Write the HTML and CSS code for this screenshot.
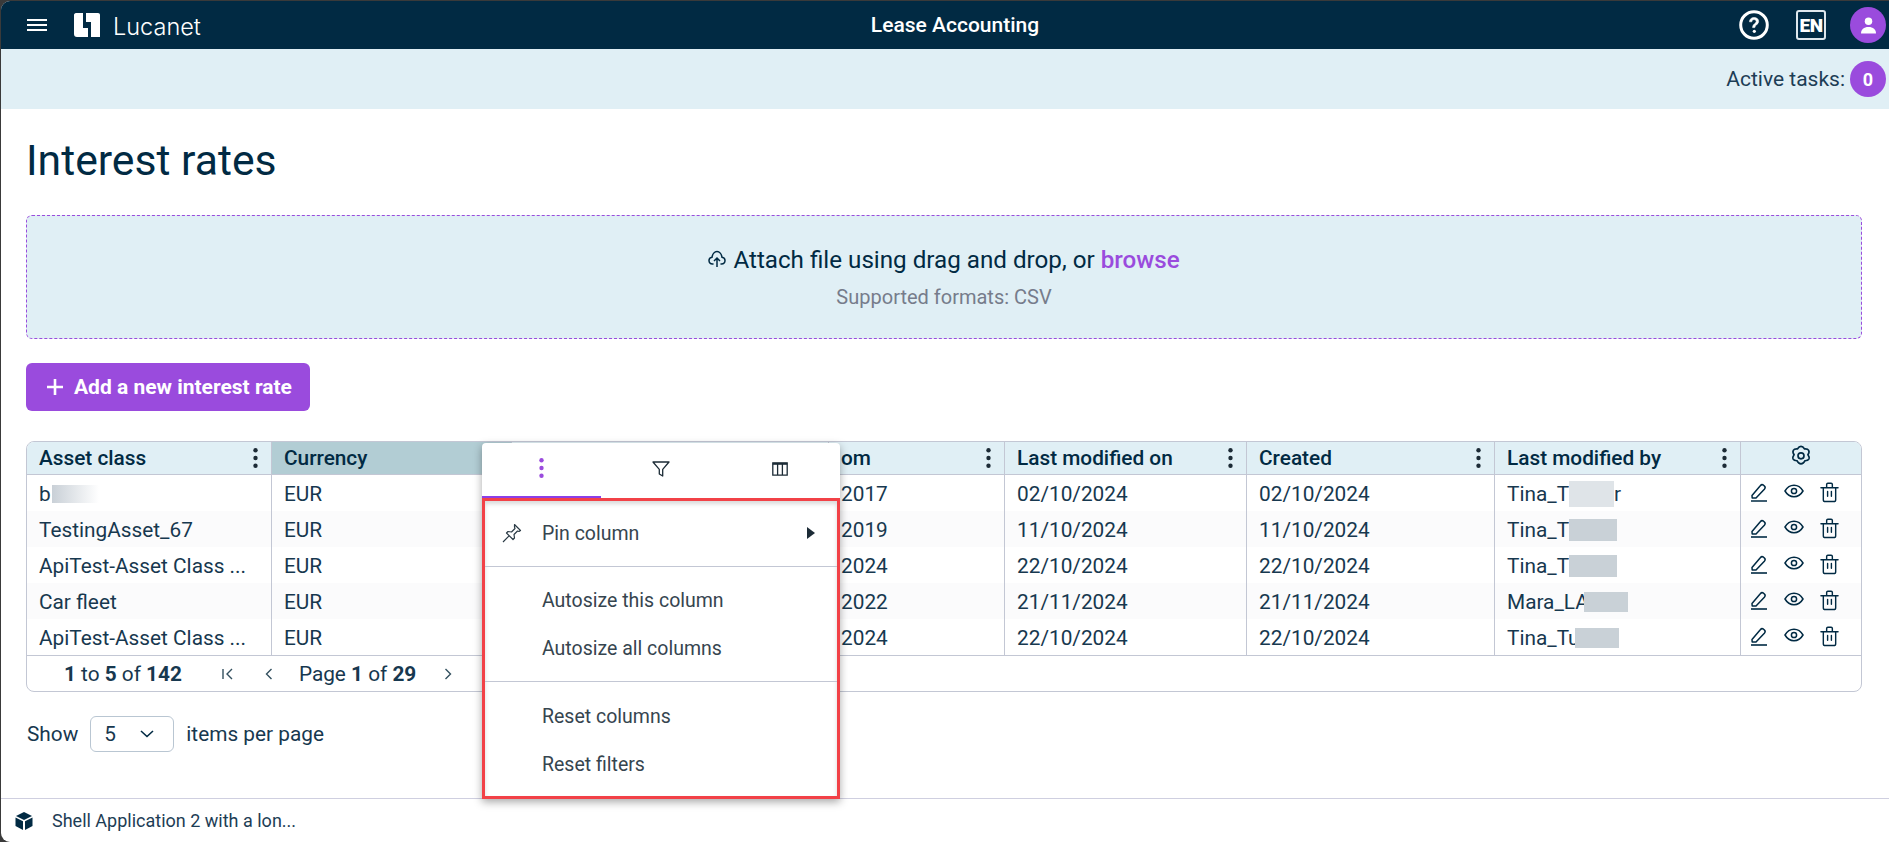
FILE: index.html
```html
<!DOCTYPE html>
<html lang="en">
<head>
    <meta charset="UTF-8">
    <meta name="viewport" content="width=device-width, initial-scale=1.0">
    <title>Interest rates - Lease Accounting</title>
    <link rel="stylesheet" href="styles.css">
</head>
<body>
<svg class="sprites" width="0" height="0">
    <symbol id="kebab" viewBox="0 0 4 20"><circle cx="2" cy="3" r="2"/><circle cx="2" cy="10" r="2"/><circle cx="2" cy="17" r="2"/></symbol>
    <symbol id="pencil" viewBox="0 0 18 20"><path d="M2 13.500 10.500 3.500c.8-1 2-1.100 3-.3l.8.7c1 .8 1 2 .3 3L6 16H2.200z" fill="none" stroke="currentColor" stroke-width="1.500" stroke-linejoin="round"/><path d="M1 19h16" fill="none" stroke="currentColor" stroke-width="1.600"/></symbol>
    <symbol id="eye" viewBox="0 0 20 14"><path d="M1 7c2.200-3.800 5.200-5.700 9-5.700s6.800 1.900 9 5.700c-2.200 3.800-5.200 5.700-9 5.700S3.200 10.800 1 7z" fill="none" stroke="currentColor" stroke-width="1.500"/><circle cx="10" cy="7" r="2.600" fill="none" stroke="currentColor" stroke-width="1.500"/></symbol>
    <symbol id="trash" viewBox="0 0 20 22"><path d="M1 6h18M3.500 6v12.500c0 1.200.8 2 2 2h9c1.200 0 2-.8 2-2V6M7 6V2.500c0-.8.5-1.300 1.300-1.300h3.400c.8 0 1.300.5 1.300 1.300V6M8 10v5M12 10v5" fill="none" stroke="currentColor" stroke-width="1.500" stroke-linecap="round"/></symbol>
</svg>

<div class="app">
    <header class="topbar">
        <div class="topbar-left">
            <svg class="burger" viewBox="0 0 20 12"><path d="M0 1h20M0 6h20M0 11h20" stroke="#fff" stroke-width="2"/></svg>
            <svg class="logo" viewBox="0 0 26 24"><path d="M2 0h7v15h5v9H3c-2 0-3-1-3-3V2c0-1 .8-2 2-2z" fill="#fff"/><path d="M12 0h12c1.200 0 2 .8 2 2v22h-9V9h-5z" fill="#fff"/></svg>
            <span class="brand">Lucanet</span>
        </div>
        <div class="app-title">Lease Accounting</div>
        <div class="topbar-right">
            <svg class="top-icon" viewBox="0 0 30 30"><circle cx="15" cy="15" r="13.300" fill="none" stroke="#fff" stroke-width="3"/><path d="M10.500 11.800c0-2.700 2-4.300 4.600-4.300s4.500 1.500 4.500 3.900c0 3.300-3.800 3.300-3.800 6.200h-2.200c0-3.900 3.600-4 3.600-6.100 0-1.100-.9-1.900-2.100-1.900-1.300 0-2.200.9-2.300 2.200z" fill="#fff" stroke="#fff" stroke-width=".6"/><circle cx="15.300" cy="21.300" r="1.600" fill="#fff"/></svg>
            <span class="lang">EN</span>
            <span class="avatar"><svg viewBox="0 0 16 18" width="15" height="17"><circle cx="8" cy="4.500" r="4" fill="#fff"/><path d="M0 17.500c0-4.500 3-7 8-7s8 2.500 8 7z" fill="#fff"/></svg></span>
        </div>
    </header>

    <div class="taskbar">
        <span>Active tasks:</span>
        <span class="task-count">0</span>
    </div>

    <main class="content">
        <h1>Interest rates</h1>

        <div class="dropzone">
            <p class="drop-main"><svg class="upload" viewBox="0 0 18 18"><path d="M5 14H4.500C2.400 14 1 12.500 1 10.600c0-1.800 1.300-3.200 3-3.400C4.500 4.300 6.500 1.500 9 1.500s4.500 2.800 5 5.700c1.700.2 3 1.600 3 3.400 0 1.900-1.400 3.400-3.500 3.400H13" fill="none" stroke="#012a43" stroke-width="1.500" stroke-linecap="round"/><path d="M9 17V8.500M6 11l3-3 3 3" fill="none" stroke="#012a43" stroke-width="1.500"/></svg>Attach file using drag and drop, or <a class="browse">browse</a></p>
            <p class="drop-hint">Supported formats: CSV</p>
        </div>

        <button class="add-btn"><svg viewBox="0 0 16 16" width="16" height="16"><path d="M8 0v16M0 8h16" stroke="#fff" stroke-width="2.600"/></svg>Add a new interest rate</button>

        <div class="grid-wrap">
            <div class="grid">
                <div class="row head">
                    <div class="cell">Asset class<svg class="kebab"><use href="#kebab"/></svg></div>
                    <div class="cell active">Currency</div>
                    <div class="cell"></div>
                    <div class="cell">om<svg class="kebab"><use href="#kebab"/></svg></div>
                    <div class="cell">Last modified on<svg class="kebab"><use href="#kebab"/></svg></div>
                    <div class="cell">Created<svg class="kebab"><use href="#kebab"/></svg></div>
                    <div class="cell">Last modified by<svg class="kebab"><use href="#kebab"/></svg></div>
                    <div class="cell center">
                        <svg class="gear" viewBox="0 0 20 20"><path d="M10 1.200c1.300 0 2.300 1 3 2.100 1.300-.1 2.800.1 3.400 1.200.7 1.100.1 2.500-.6 3.600.7 1 1.500 2.300.9 3.500-.6 1.100-2 1.500-3.300 1.500-.6 1.200-1.700 2.700-3.400 2.700s-2.800-1.500-3.400-2.700c-1.300 0-2.700-.4-3.300-1.500-.6-1.200.2-2.500.9-3.500-.7-1.100-1.300-2.500-.6-3.600.6-1.100 2.100-1.300 3.400-1.200.7-1.100 1.700-2.100 3-2.100z" fill="none" stroke="currentColor" stroke-width="1.400"/><circle cx="10" cy="9" r="2.500" fill="none" stroke="currentColor" stroke-width="1.400"/></svg>
                    </div>
                </div>
                <div class="row">
                    <div class="cell">b<span class="blur fade"></span></div>
                    <div class="cell">EUR</div>
                    <div class="cell"></div>
                    <div class="cell">2017</div>
                    <div class="cell">02/10/2024</div>
                    <div class="cell">02/10/2024</div>
                    <div class="cell">Tina_T<span class="blur pale"></span>r</div>
                    <div class="cell actions"><svg class="pencil"><use href="#pencil"/></svg><svg class="eye"><use href="#eye"/></svg><svg class="trash"><use href="#trash"/></svg></div>
                </div>
                <div class="row">
                    <div class="cell">TestingAsset_67</div>
                    <div class="cell">EUR</div>
                    <div class="cell"></div>
                    <div class="cell">2019</div>
                    <div class="cell">11/10/2024</div>
                    <div class="cell">11/10/2024</div>
                    <div class="cell">Tina_T<span class="blur wide"></span></div>
                    <div class="cell actions"><svg class="pencil"><use href="#pencil"/></svg><svg class="eye"><use href="#eye"/></svg><svg class="trash"><use href="#trash"/></svg></div>
                </div>
                <div class="row">
                    <div class="cell">ApiTest-Asset Class ...</div>
                    <div class="cell">EUR</div>
                    <div class="cell"></div>
                    <div class="cell">2024</div>
                    <div class="cell">22/10/2024</div>
                    <div class="cell">22/10/2024</div>
                    <div class="cell">Tina_T<span class="blur wide"></span></div>
                    <div class="cell actions"><svg class="pencil"><use href="#pencil"/></svg><svg class="eye"><use href="#eye"/></svg><svg class="trash"><use href="#trash"/></svg></div>
                </div>
                <div class="row">
                    <div class="cell">Car fleet</div>
                    <div class="cell">EUR</div>
                    <div class="cell"></div>
                    <div class="cell">2022</div>
                    <div class="cell">21/11/2024</div>
                    <div class="cell">21/11/2024</div>
                    <div class="cell">Mara_LA<span class="blur over"></span></div>
                    <div class="cell actions"><svg class="pencil"><use href="#pencil"/></svg><svg class="eye"><use href="#eye"/></svg><svg class="trash"><use href="#trash"/></svg></div>
                </div>
                <div class="row">
                    <div class="cell">ApiTest-Asset Class ...</div>
                    <div class="cell">EUR</div>
                    <div class="cell"></div>
                    <div class="cell">2024</div>
                    <div class="cell">22/10/2024</div>
                    <div class="cell">22/10/2024</div>
                    <div class="cell">Tina_Tu<span class="blur over"></span></div>
                    <div class="cell actions"><svg class="pencil"><use href="#pencil"/></svg><svg class="eye"><use href="#eye"/></svg><svg class="trash"><use href="#trash"/></svg></div>
                </div>
                <div class="pager">
                    <span class="pager-count"><b>1</b> to <b>5</b> of <b>142</b></span>
                    <svg class="pager-btn" viewBox="0 0 14 14"><path d="M2 2v10M11 2 6 7l5 5" fill="none" stroke="currentColor" stroke-width="1.400"/></svg>
                    <svg class="pager-btn" viewBox="0 0 14 14"><path d="M9.500 2 4.500 7l5 5" fill="none" stroke="currentColor" stroke-width="1.400"/></svg>
                    <span class="pager-page">Page <b>1</b> of <b>29</b></span>
                    <svg class="pager-btn" viewBox="0 0 14 14"><path d="M4.500 2l5 5-5 5" fill="none" stroke="currentColor" stroke-width="1.400"/></svg>
                </div>
            </div>

            <div class="col-menu">
                <div class="tabs">
                    <div class="tab selected"><svg class="kebab purple"><use href="#kebab"/></svg></div>
                    <div class="tab"><svg viewBox="0 0 18 18" width="18" height="18"><path d="M1 2h16l-6.300 7.300V16l-3.400-2V9.300z" fill="none" stroke="#1c2b36" stroke-width="1.300" stroke-linejoin="round"/></svg></div>
                    <div class="tab"><svg viewBox="0 0 16 14" width="16" height="14"><path d="M.8.800h14.400v12.400H.8zM5.600.800v12.400M10.400.800v12.400" fill="none" stroke="#1c2b36" stroke-width="1.300"/><path d="M.8.800h14.400v2H.8z" fill="#1c2b36"/></svg></div>
                </div>
                <div class="menu">
                    <div class="menu-item">
                        <svg class="pin" viewBox="0 0 20 20"><path d="M12.500 1.500 18.500 7.500 17 8.500l-1.500-.5-3.500 3.500.5 3.500-1.500 1.500-6.500-6.500L6 8.500l3.500.5L13 5.500l-.5-1.500zM6.800 13.200 1 19" fill="none" stroke="#2a3a45" stroke-width="1.200" stroke-linejoin="round"/></svg>
                        Pin column
                        <span class="arrow"></span>
                    </div>
                    <div class="menu-sep"></div>
                    <div class="menu-item">Autosize this column</div>
                    <div class="menu-item">Autosize all columns</div>
                    <div class="menu-sep"></div>
                    <div class="menu-item">Reset columns</div>
                    <div class="menu-item">Reset filters</div>
                </div>
            </div>
        </div>

        <div class="page-size">
            Show
            <span class="size-select">5<svg viewBox="0 0 14 8" width="14" height="8"><path d="M1 1l6 5.500L13 1" fill="none" stroke="#012a43" stroke-width="1.600"/></svg></span>
            items per page
        </div>
    </main>

    <footer class="shellbar">
        <svg viewBox="0 0 18 18" width="18" height="18"><path d="M9 0 17 4 9 8 1 4zM0.500 5.500 8 9.300V18L0.500 14zM17.500 5.500 10 9.300V18l7.500-4z" fill="#012a43"/></svg>
        <span>Shell Application 2 with a lon...</span>
    </footer>
</div>
</body>
</html>
```

FILE: styles.css
```css
* {
    box-sizing: border-box;
}
body {
    margin: 0;
    height: 842px;
    overflow: hidden;
    background-color: #3a3a3a;
    font-family: 'Roboto', sans-serif;
    color: #012a43;
}
.sprites {
    position: absolute;
}
.app {
    margin: 1px 0 0 1px;
    height: 841px;
    display: flex;
    flex-direction: column;
    background-color: #ffffff;
    border-radius: 9px 0 0 9px;
    overflow: hidden;
}

/* top bar */
.topbar {
    height: 48px;
    flex-shrink: 0;
    display: grid;
    grid-template-columns: 1fr auto 1fr;
    align-items: center;
    background-color: #012a43;
    color: white;
}
.topbar-left {
    display: flex;
    align-items: center;
    padding-left: 26px;
}
.burger {
    width: 20px;
    height: 12px;
}
.logo {
    width: 26px;
    height: 24px;
    margin-left: 27px;
}
.brand {
    margin: 2px 0 0 13px;
    font-family: 'Inter', sans-serif;
    font-size: 23.500px;
    font-weight: 300;
}
.app-title {
    padding-left: 20px;
    font-size: 21px;
    font-weight: 500;
}
.topbar-right {
    display: flex;
    align-items: center;
    justify-content: flex-end;
    padding-right: 3px;
}
.top-icon {
    width: 30px;
    height: 30px;
}
.lang {
    width: 30px;
    height: 30px;
    margin-left: 27px;
    display: flex;
    align-items: center;
    justify-content: center;
    border: 2px solid #dfe8ee;
    border-radius: 3px;
    font-size: 19px;
    font-weight: 900;
    letter-spacing: -0.5px;
}
.avatar {
    width: 36px;
    height: 36px;
    margin-left: 24px;
    display: flex;
    align-items: center;
    justify-content: center;
    border-radius: 50%;
    background-color: #9a4bdd;
}

/* active tasks */
.taskbar {
    height: 60px;
    flex-shrink: 0;
    display: flex;
    align-items: center;
    justify-content: flex-end;
    gap: 5px;
    padding-right: 3px;
    background-color: #e0eff5;
    font-size: 21px;
    color: #1d3d55;
}
.task-count {
    width: 36px;
    height: 36px;
    display: flex;
    align-items: center;
    justify-content: center;
    border-radius: 50%;
    background-color: #9a4bdd;
    color: white;
    font-size: 18px;
    font-weight: 700;
}

/* page */
.content {
    flex: 1;
    padding: 27px 27px 0 25px;
}
h1 {
    margin: 0;
    font-size: 42.700px;
    line-height: 48px;
    font-weight: 400;
}
.dropzone {
    height: 124px;
    margin-top: 31px;
    display: flex;
    flex-direction: column;
    align-items: center;
    justify-content: center;
    gap: 11px;
    background-color: #e0eff5;
    border: 1px dashed #9a4bdd;
    border-radius: 6px;
}
.dropzone p {
    margin: 0;
}
.drop-main {
    font-size: 24.200px;
    line-height: 28px;
}
.upload {
    width: 18px;
    height: 18px;
    margin-right: 7px;
}
.browse {
    color: #9a4bdd;
    font-weight: 500;
}
.drop-hint {
    font-size: 20px;
    line-height: 24px;
    color: #767c8b;
}
.add-btn {
    height: 48px;
    margin-top: 24px;
    padding: 0 18px 0 21px;
    display: flex;
    align-items: center;
    gap: 11px;
    border: none;
    border-radius: 6px;
    background-color: #9a4bdd;
    color: white;
    font-family: 'Roboto', sans-serif;
    font-size: 21px;
    font-weight: 700;
}

/* grid */
.grid-wrap {
    position: relative;
    margin-top: 30px;
}
.grid {
    height: 251px;
    border: 1px solid #c3c7d4;
    border-radius: 8px;
    overflow: hidden;
    font-size: 20.800px;
    color: #17384f;
}
.row {
    height: 36px;
    display: grid;
    grid-template-columns: 245px 240px 317px 176px 242px 248px 246px 1fr;
}
.row:nth-child(odd) {
    background-color: #fbfbfc;
}
.row.head {
    height: 33px;
    background-color: #e0eff5;
    border-bottom: 1px solid #c3c7d4;
    font-weight: 500;
    color: #012a43;
}
.cell {
    position: relative;
    display: flex;
    align-items: center;
    padding: 2px 0 0 12px;
    border-right: 1px solid #c3c7d4;
    white-space: pre;
    overflow: hidden;
}
.cell:last-child {
    border-right: none;
}
.head .cell {
    padding: 0 0 1px 12px;
}
.head .active {
    background-color: #b2cdd4;
}
.head .center {
    justify-content: center;
    padding-left: 0;
}
.kebab {
    position: absolute;
    right: 13px;
    top: 5px;
    width: 5px;
    height: 22px;
    fill: #1c2b36;
}
.kebab.purple {
    position: static;
    fill: #9a4bdd;
}
.gear {
    width: 24px;
    height: 24px;
    margin-top: -2px;
}
.blur {
    display: inline-block;
    height: 18px;
    background-color: #c9d1d7;
}
.blur.fade {
    width: 47px;
    margin-left: 1px;
    background: linear-gradient(90deg, #c9d0d7, #ffffff);
}
.blur.pale {
    width: 45px;
    height: 26px;
    background-color: #dfe4e8;
}
.blur.wide {
    width: 48px;
    height: 22px;
}
.blur.over {
    width: 44px;
    height: 20px;
    margin-left: -5px;
}
.actions {
    gap: 16px;
    padding: 0 0 2px 9px;
    color: #012a43;
}
.pencil {
    width: 18px;
    height: 20px;
}
.eye {
    width: 20px;
    height: 14px;
    margin-top: -2px;
}
.trash {
    width: 19px;
    height: 21px;
}
.pager {
    height: 36px;
    display: flex;
    align-items: center;
    padding-left: 37px;
    border-top: 1px solid #c3c7d4;
}
.pager b {
    font-weight: 700;
}
.pager-btn {
    width: 14px;
    height: 14px;
    color: #33505f;
    margin-left: 27px;
}
.pager-count + .pager-btn {
    margin-left: 39px;
}
.pager-page {
    margin: 0 -2px 0 23px;
}

/* column menu */
.col-menu {
    position: absolute;
    left: 456px;
    top: 2px;
    width: 358px;
    background-color: #ffffff;
    border-radius: 4px 4px 0 0;
    box-shadow: 0 3px 9px rgba(0, 0, 0, 0.35);
    color: #36454f;
    font-size: 19.500px;
}
.tabs {
    height: 55px;
    display: grid;
    grid-template-columns: repeat(3, 1fr);
}
.tab {
    display: flex;
    align-items: center;
    justify-content: center;
    padding-bottom: 4px;
}
.tab.selected {
    border-bottom: 2px solid #8a3fe8;
}
.menu {
    height: 301px;
    padding: 8px 0;
    border: 3px solid #f24147;
    box-shadow: inset 0 3px 4px rgba(0, 0, 0, 0.15);
}
.menu-item {
    position: relative;
    height: 48px;
    display: flex;
    align-items: center;
    padding-left: 57px;
}
.menu-sep {
    height: 1px;
    margin: 9px 0;
    background-color: #c3c7d4;
}
.menu-item:nth-child(4) + .menu-sep {
    margin-bottom: 10px;
}
.pin {
    position: absolute;
    left: 17px;
    top: 14px;
    width: 20px;
    height: 20px;
}
.arrow {
    position: absolute;
    right: 22px;
    top: 18px;
    border-left: 8px solid #1c2b36;
    border-top: 6px solid transparent;
    border-bottom: 6px solid transparent;
}

/* page size */
.page-size {
    margin-top: 24px;
    padding-left: 1px;
    height: 36px;
    display: flex;
    align-items: center;
    gap: 12px;
    font-size: 20.800px;
    color: #17384f;
}
.size-select {
    width: 84px;
    height: 36px;
    padding: 0 19px 0 13px;
    display: flex;
    align-items: center;
    justify-content: space-between;
    border: 1px solid #b9c6d2;
    border-radius: 6px;
}

/* bottom bar */
.shellbar {
    height: 44px;
    flex-shrink: 0;
    display: flex;
    align-items: center;
    gap: 19px;
    padding-left: 14px;
    border-top: 1px solid #cfcfe0;
    font-size: 18px;
    color: #1d3d55;
}
```
